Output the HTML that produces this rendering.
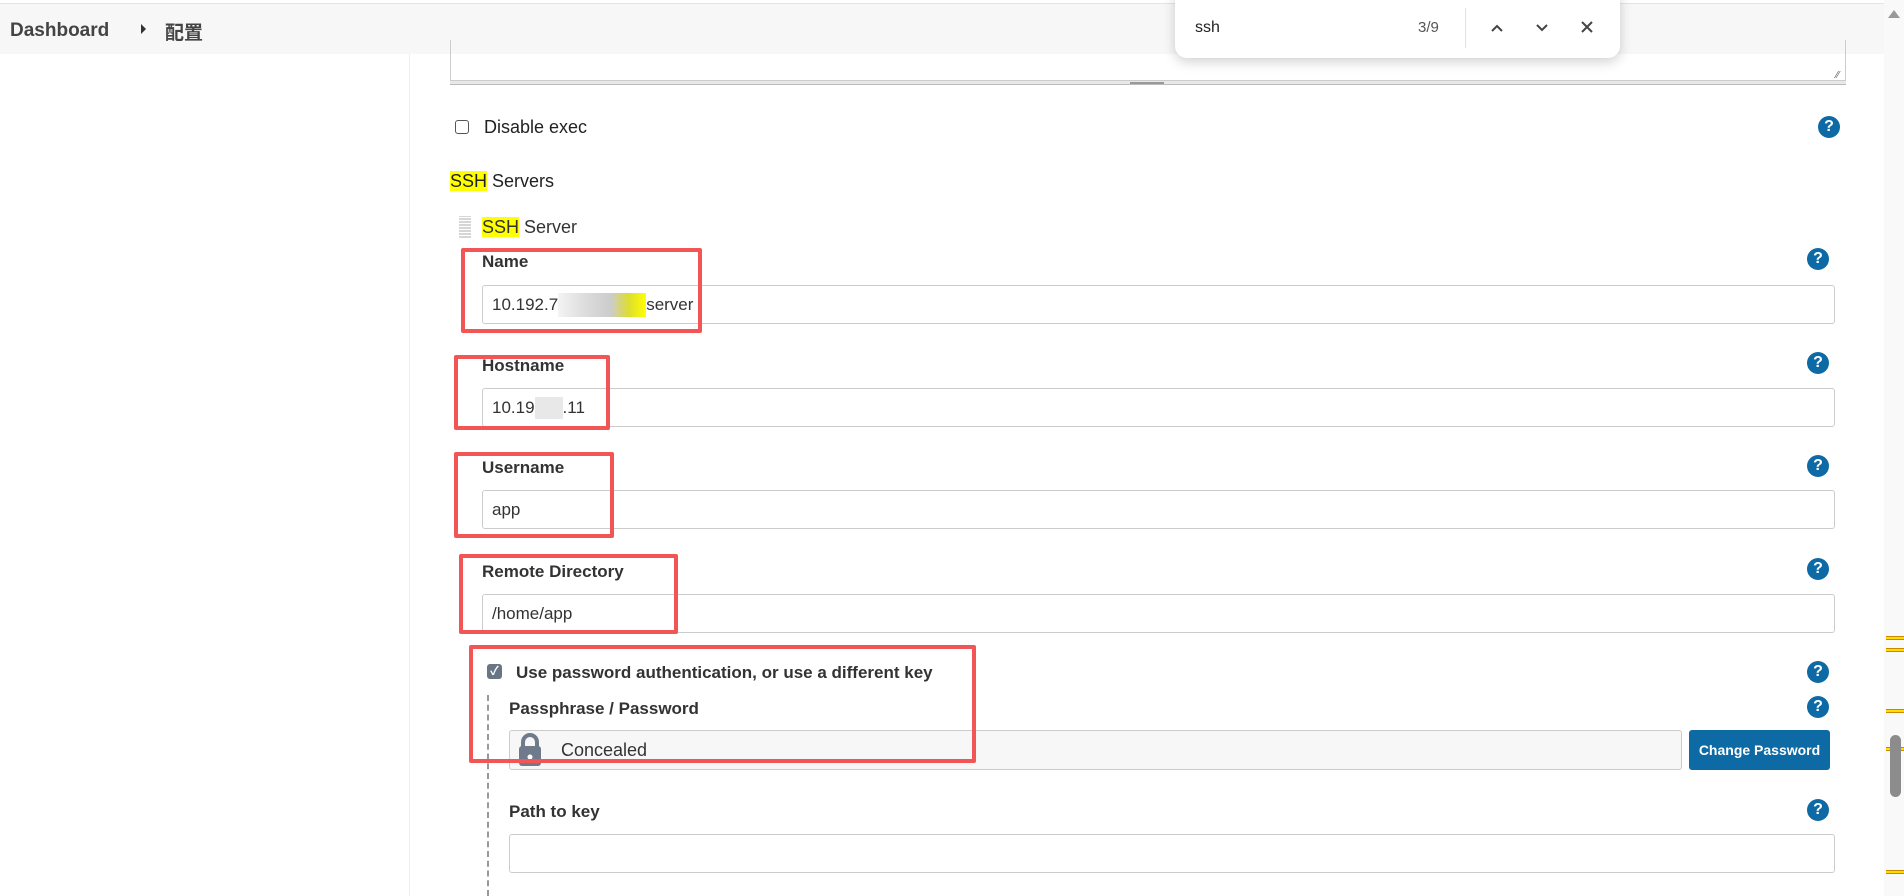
<!DOCTYPE html>
<html><head><meta charset="utf-8"><style>
*{box-sizing:border-box;margin:0;padding:0}
body{width:1904px;height:896px;overflow:hidden;background:#fff;font-family:"Liberation Sans","Noto Sans CJK SC",sans-serif;color:#333;position:relative}
.a{position:absolute}
.hdr{left:0;top:3px;width:1884px;height:51px;background:#f7f7f7;border-top:1px solid #e4e4e4}
.lbl{font-size:17px;font-weight:bold;color:#333;white-space:nowrap}
.inp{border:1px solid #ccc;border-radius:3px;background:#fff;font-size:17px;padding-left:9px;display:flex;align-items:center;color:#333}
.help{width:22px;height:22px;border-radius:50%;background:#0e6aa4;color:#fff;font-size:16px;font-weight:bold;text-align:center;line-height:22px}
.red{border:4px solid #f25555;border-radius:2px}
.hl{background:#ffff00}
.mk{left:1886px;width:18px;height:4px;border-top:1px solid #c80;border-bottom:1px solid #c80;background:#fd0}
</style></head><body>
<div class="a hdr"></div>
<div class="a" style="left:10px;top:20px;font-size:19px;font-weight:bold;color:#444">Dashboard</div>
<div class="a" style="left:141px;top:24px;width:0;height:0;border-left:5px solid #333;border-top:5px solid transparent;border-bottom:5px solid transparent"></div>
<div class="a" style="left:165px;top:18px;font-size:19px;font-weight:bold;color:#444">配置</div>
<div class="a" style="left:409px;top:54px;width:1px;height:842px;background:#eee"></div>
<div class="a" style="left:450px;top:40px;width:1396px;height:42px;border:1px solid #ccc;border-top:none"></div>
<div class="a" style="left:450px;top:80px;width:1396px;height:5px;background:#e8e8e8;border-top:1px solid #ccc;border-bottom:1px solid #bbb"></div>
<div class="a" style="left:1130px;top:82px;width:34px;height:2px;background:#999"></div>
<div class="a" style="left:1836px;top:70px;font-size:10px;color:#666">⁄⁄</div>
<div class="a" style="left:455px;top:120px;width:14px;height:14px;border:1.5px solid #555;border-radius:3px"></div>
<div class="a lbl" style="left:484px;top:117px;font-weight:normal;font-size:18px;color:#222">Disable exec</div>
<div class="a help" style="left:1818px;top:116px">?</div>
<div class="a" style="left:450px;top:171px;font-size:18px;color:#222"><span class="hl">SSH</span> Servers</div>
<div class="a" style="left:459px;top:216px;width:12px;height:22px;background:repeating-linear-gradient(0deg,#ccc 0 2px,transparent 2px 3px),#fff;opacity:.8"></div>
<div class="a" style="left:482px;top:217px;font-size:18px;color:#333"><span class="hl">SSH</span> Server</div>
<div class="a lbl" style="left:482px;top:252px">Name</div>
<div class="a help" style="left:1807px;top:248px">?</div>
<div class="a inp" style="left:482px;top:285px;width:1353px;height:39px">10.192.7<span style="display:inline-block;width:88px;height:24px;background:linear-gradient(90deg,#f4f4f4,#ddd,#ccc 60%,#dd3 80%,#ff0)"></span>server</div>
<div class="a lbl" style="left:482px;top:356px">Hostname</div>
<div class="a help" style="left:1807px;top:352px">?</div>
<div class="a inp" style="left:482px;top:388px;width:1353px;height:39px">10.19<span style="display:inline-block;width:28px;height:22px;background:#e8e8e8"></span>.11</div>
<div class="a lbl" style="left:482px;top:458px">Username</div>
<div class="a help" style="left:1807px;top:455px">?</div>
<div class="a inp" style="left:482px;top:490px;width:1353px;height:39px">app</div>
<div class="a lbl" style="left:482px;top:562px">Remote Directory</div>
<div class="a help" style="left:1807px;top:558px">?</div>
<div class="a inp" style="left:482px;top:594px;width:1353px;height:39px">/home/app</div>
<div class="a" style="left:487px;top:664px;width:15px;height:15px;background:#687585;border-radius:3px;color:#fff;font-size:12px;line-height:15px;text-align:center;font-weight:bold">✓</div>
<div class="a lbl" style="left:516px;top:663px">Use password authentication, or use a different key</div>
<div class="a help" style="left:1807px;top:661px">?</div>
<div class="a" style="left:487px;top:695px;height:201px;border-left:2px dashed #999"></div>
<div class="a lbl" style="left:509px;top:699px">Passphrase / Password</div>
<div class="a help" style="left:1807px;top:696px">?</div>
<div class="a inp" style="left:509px;top:730px;width:1173px;height:40px;background:#f7f7f7;padding-left:0"></div>
<svg class="a" style="left:518px;top:733px" width="24" height="33" viewBox="0 0 24 33"><path d="M5 14V9a7 7 0 0 1 14 0v5" fill="none" stroke="#6f7b8b" stroke-width="4"/><rect x="1" y="13" width="22" height="20" rx="3" fill="#6f7b8b"/><circle cx="12" cy="24" r="2.5" fill="#fff"/></svg>
<div class="a" style="left:561px;top:740px;font-size:18px;color:#333">Concealed</div>
<div class="a" style="left:1689px;top:730px;width:141px;height:40px;background:#0e6aa4;border-radius:3px;color:#fff;font-size:14px;font-weight:bold;text-align:center;line-height:40px">Change Password</div>
<div class="a lbl" style="left:509px;top:802px">Path to key</div>
<div class="a help" style="left:1807px;top:799px">?</div>
<div class="a inp" style="left:509px;top:834px;width:1326px;height:39px"></div>
<div class="a red" style="left:461px;top:248px;width:241px;height:85px"></div>
<div class="a red" style="left:454px;top:355px;width:156px;height:75px"></div>
<div class="a red" style="left:454px;top:452px;width:160px;height:86px"></div>
<div class="a red" style="left:459px;top:554px;width:219px;height:80px"></div>
<div class="a red" style="left:469px;top:645px;width:507px;height:118px"></div>
<div class="a" style="left:1884px;top:0;width:20px;height:896px;background:#f9f9f9"></div>
<div class="a" style="left:1888px;top:10px;width:0;height:0;border-left:6px solid transparent;border-right:6px solid transparent;border-bottom:8px solid #999"></div>
<div class="a mk" style="top:636px"></div>
<div class="a mk" style="top:648px"></div>
<div class="a mk" style="top:709px"></div>
<div class="a mk" style="top:747px"></div>
<div class="a mk" style="top:870px"></div>
<div class="a" style="left:1890px;top:735px;width:11px;height:62px;background:#8c8c8c;border-radius:6px"></div>
<div class="a" style="left:1175px;top:-10px;width:445px;height:68px;background:#fff;border-radius:0 0 12px 12px;box-shadow:0 4px 12px rgba(0,0,0,.18)"></div>
<div class="a" style="left:1195px;top:19px;font-size:16px;color:#222">ssh</div>
<div class="a" style="left:1418px;top:19px;font-size:15px;color:#555">3/9</div>
<div class="a" style="left:1465px;top:8px;width:1px;height:40px;background:#d6e4f2"></div>
<svg class="a" style="left:1489px;top:20px" width="16" height="16"><path d="M3 11l5-5 5 5" fill="none" stroke="#444" stroke-width="2"/></svg>
<svg class="a" style="left:1534px;top:20px" width="16" height="16"><path d="M3 5l5 5 5-5" fill="none" stroke="#444" stroke-width="2"/></svg>
<svg class="a" style="left:1579px;top:19px" width="16" height="16"><path d="M3 3l10 10M13 3L3 13" fill="none" stroke="#444" stroke-width="2"/></svg>
</body></html>
